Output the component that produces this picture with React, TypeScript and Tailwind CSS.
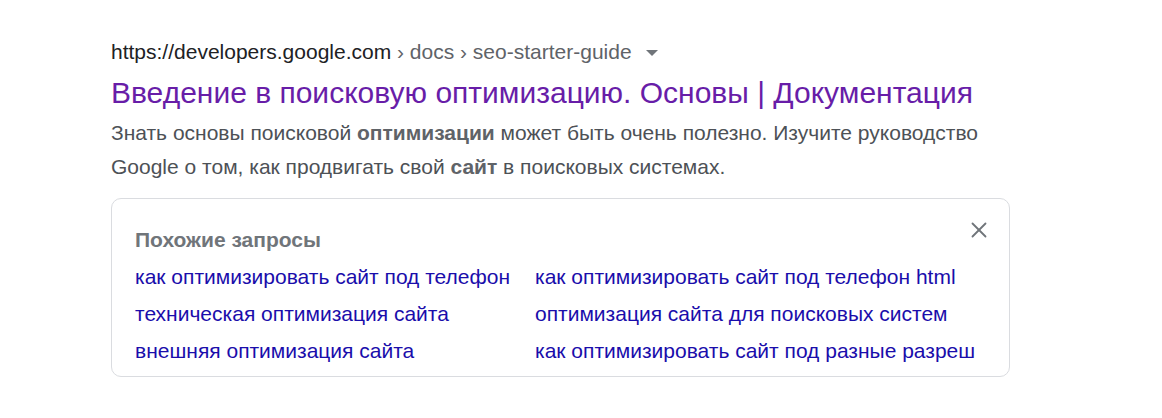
import { X } from 'lucide-react';

const RELATED = [
  'как оптимизировать сайт под телефон',
  'как оптимизировать сайт под телефон html',
  'техническая оптимизация сайта',
  'оптимизация сайта для поисковых систем',
  'внешняя оптимизация сайта',
  'как оптимизировать сайт под разные разреш',
];

export default function App() {
  return (
    <div className="min-h-[418px] w-full bg-white font-['Liberation_Sans',Arial,sans-serif]">
      <div className="pl-[111px] pt-[38px] w-[1010px]">
        <div className="flex items-center text-[21px] leading-[28px]">
          <span className="text-[#202124]">https://developers.google.com</span>
          <span className="text-[#5f6368]">&nbsp;› docs › seo-starter-guide</span>
          <span className="ml-[14px] mt-[1px] h-0 w-0 border-x-[6px] border-t-[6px] border-x-transparent border-t-[#70757a]" />
        </div>
        <a className="block pt-[9px] text-[30px] leading-[36px] text-[#681da8] whitespace-nowrap">
          Введение в поисковую оптимизацию. Основы | Документация
        </a>
        <p className="mt-[5px] text-[21px] leading-[34px] text-[#4d5156] whitespace-nowrap">
          Знать основы поисковой <b className="text-[#5f6368]">оптимизации</b> может быть очень полезно. Изучите руководство
          <br />
          Google о том, как продвигать свой <b className="text-[#5f6368]">сайт</b> в поисковых системах.
        </p>
        <div className="relative mt-[14px] h-[179px] rounded-[10px] border border-[#dadce0] px-[23px] pt-[28px]">
          <button className="absolute right-[17px] top-[18px] text-[#70757a]">
            <X className="h-[26px] w-[26px]" strokeWidth={1.7} />
          </button>
          <div className="text-[21px] font-bold leading-[26px] text-[#70757a]">Похожие запросы</div>
          <div className="mt-[12px] grid grid-cols-[400px_1fr] gap-y-[13px]">
            {RELATED.map((q) => (
              <a key={q} className="text-[21px] leading-[24px] text-[#1a0dab] whitespace-nowrap">
                {q}
              </a>
            ))}
          </div>
        </div>
      </div>
    </div>
  );
}
